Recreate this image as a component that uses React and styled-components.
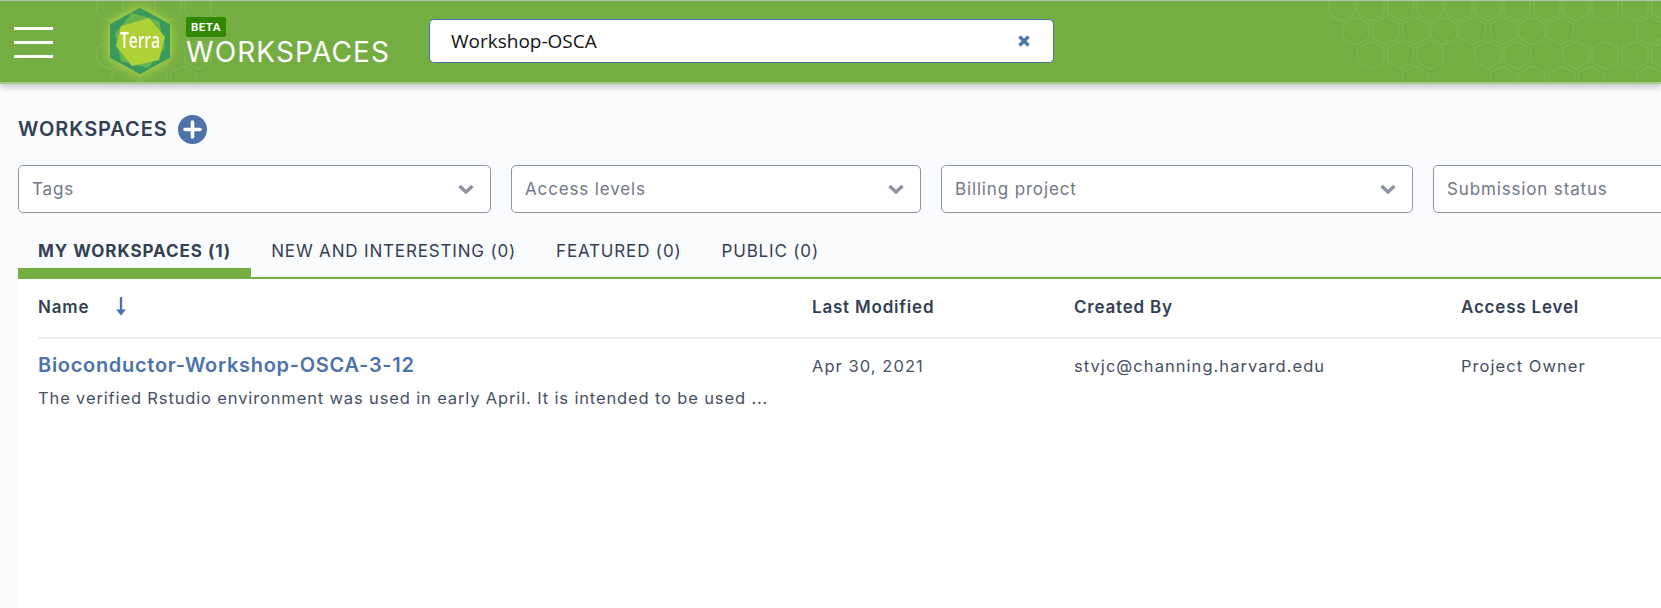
import React from 'react';
import styled, { createGlobalStyle } from 'styled-components';

const SANS = `Inter, 'Noto Sans', sans-serif`;
const GREEN = '#74ae43';
const BLUE = '#4d72aa';
const DARK = '#333f52';

const GlobalStyles = createGlobalStyle`
  html, body {
    margin: 0;
    height: 100%;
    overflow: hidden;
    background: #fafbfd;
    font-family: ${SANS};
  }
`;

const Page = styled.div`
  display: flex;
  flex-direction: column;
  height: 100vh;
  width: 1661px;
  overflow: hidden;
`;

const TopBar = styled.header`
  position: relative;
  z-index: 1;
  flex: none;
  box-sizing: border-box;
  height: 84px;
  display: flex;
  align-items: center;
  background: ${GREEN};
  border-top: 1px solid #b9bdb6;
  border-bottom: 2px solid #a3cb85;
  box-shadow: 0 3px 6px rgba(0, 0, 0, 0.22);
  overflow: hidden;
`;

const HexLayer = styled.svg`
  position: absolute;
  left: 0;
  top: -1px;
  pointer-events: none;
`;

const MenuButton = styled.div`
  display: flex;
  flex-direction: column;
  gap: 11px;
  width: 39px;
  margin-left: 14px;
  margin-top: 2px;
`;

const MenuBar = styled.span`
  display: block;
  height: 3px;
  background: #fff;
`;

const LogoMark = styled.svg`
  position: relative;
  flex: none;
  width: 60px;
  height: 66px;
  margin-left: 57px;
  margin-bottom: 1px;
  overflow: visible;
  filter: drop-shadow(0 0 6px rgba(205, 232, 70, 0.85));
`;

const TitleBlock = styled.div`
  position: relative;
  flex: none;
  width: 203px;
  margin-left: 16px;
`;

const BetaBadge = styled.div`
  width: 40px;
  height: 20px;
  border-radius: 2px;
  background: #318700;
  color: #fff;
  font: 700 11.5px/20px Roboto, sans-serif;
  letter-spacing: 0.4px;
  text-align: center;
`;

const AppTitle = styled.div`
  color: #fff;
  font-size: 28px;
  line-height: 28px;
  font-weight: 400;
  letter-spacing: 1.1px;
  white-space: nowrap;
  margin-top: 1px;
`;

const SearchBox = styled.div`
  position: relative;
  flex: none;
  box-sizing: border-box;
  width: 625px;
  height: 44px;
  margin-left: 40px;
  margin-bottom: 1px;
  padding: 0 21px;
  display: flex;
  align-items: center;
  justify-content: space-between;
  background: #fff;
  border: 1px solid ${BLUE};
  border-radius: 5px;
`;

const SearchText = styled.span`
  color: #111;
  font: 400 19px 'Open Sans', sans-serif;
`;

const ClearIcon = styled.svg`
  width: 14px;
  height: 14px;
  margin-right: 1px;
`;

const Main = styled.main`
  flex: 1;
  display: flex;
  flex-direction: column;
  min-height: 0;
  padding-left: 18px;
`;

const TitleRow = styled.div`
  display: flex;
  align-items: center;
  gap: 10px;
  height: 30px;
  margin-top: 30px;
`;

const PageTitle = styled.h1`
  margin: 0;
  color: ${DARK};
  font-size: 20px;
  font-weight: 600;
  letter-spacing: 0.95px;
`;

const AddButton = styled.svg`
  width: 29px;
  height: 29px;
`;

const Filters = styled.div`
  display: flex;
  gap: 20px;
  margin-top: 21px;
`;

const Select = styled.div`
  flex: none;
  box-sizing: border-box;
  width: ${(p) => p.$width}px;
  height: 48px;
  padding: 0 16px 0 13px;
  display: flex;
  align-items: center;
  justify-content: space-between;
  background: #fff;
  border: 1px solid #8f95a5;
  border-radius: 5px;
  color: #717786;
  font-size: 17px;
  letter-spacing: 0.85px;
`;

const Chevron = styled.svg`
  width: 16px;
  height: 10px;
`;

const Tabs = styled.nav`
  display: flex;
  height: 66px;
  border-bottom: 2px solid ${GREEN};
  box-sizing: border-box;
`;

const Tab = styled.div`
  display: flex;
  align-items: center;
  box-sizing: border-box;
  height: 65px;
  padding: 20px 20px 0;
  white-space: nowrap;
  color: ${DARK};
  font-size: 17px;
  font-weight: ${(p) => (p.$active ? 700 : 400)};
  letter-spacing: ${(p) => (p.$active ? '0.95px' : '0.83px')};
  border-bottom: 10px solid ${(p) => (p.$active ? GREEN : 'transparent')};
`;

const Table = styled.section`
  flex: 1;
  background: #fff;
  padding-left: 20px;
`;

const Columns = styled.div`
  display: grid;
  grid-template-columns: 774px 262px 387px 1fr;
`;

const HeaderRow = styled(Columns)`
  height: 60px;
  align-items: center;
  border-bottom: 2px solid #eceef1;
  box-sizing: border-box;
`;

const HeaderCell = styled.div`
  display: flex;
  align-items: center;
  gap: 26px;
  color: ${DARK};
  font-size: 17px;
  font-weight: 600;
  letter-spacing: 0.8px;
  margin-bottom: 3px;
`;

const SortArrow = styled.svg`
  width: 12px;
  height: 19px;
`;

const DataRow = styled(Columns)`
  padding-top: 14px;
`;

const NameCell = styled.div`
  display: flex;
  flex-direction: column;
  gap: 11px;
`;

const WorkspaceLink = styled.a`
  color: ${BLUE};
  font-size: 20px;
  line-height: 24px;
  font-weight: 600;
  letter-spacing: 0.7px;
  white-space: nowrap;
`;

const Description = styled.div`
  color: #465062;
  font-size: 16.5px;
  line-height: 21px;
  letter-spacing: 0.86px;
  white-space: nowrap;
`;

const DataCell = styled.div`
  color: #465062;
  font-size: 16.5px;
  line-height: 26px;
  letter-spacing: 1.05px;
  white-space: nowrap;
`;

// hexagon centres [y, x list] read off the header background
const HEX_ROWS = [
  [7, [110, 168, 198, 1342, 1371, 1401, 1430, 1459, 1488, 1517, 1547, 1576, 1605, 1635, 1665]],
  [31, [1356, 1386, 1415, 1444, 1473, 1503, 1532, 1561, 1650]],
  [55, [110, 198, 1371, 1401, 1430, 1488, 1517, 1576, 1605, 1635, 1665]],
  [80, [125, 154, 183, 1415, 1503, 1532, 1562, 1591, 1650]],
];

const hexPoints = (cx, cy) =>
  [[0, -14], [13, -7], [13, 7], [0, 14], [-13, 7], [-13, -7]]
    .map(([x, y]) => `${cx + x},${cy + y}`)
    .join(' ');

const HexBackground = () => (
  <HexLayer width="1661" height="84" fill="none" stroke="rgba(255,255,255,0.09)" strokeWidth="1.2" strokeLinejoin="round">
    {HEX_ROWS.map(([y, xs]) => xs.map((x) => <polygon key={`${x}-${y}`} points={hexPoints(x, y)} />))}
  </HexLayer>
);

const Logo = () => (
  <LogoMark viewBox="0 0 60 66">
    <polygon points="30,1 59,17 59,49 30,65 1,49 1,17" fill="#3a9a5c" stroke="#3a9a5c" strokeWidth="2" strokeLinejoin="round" />
    <polygon points="22,5 49,13 55,40 38,60 11,53 5,26" fill="#69b44c" />
    <polygon points="11,18 39,10 55,29 49,52 22,58 6,38" fill="#aed136" />
    <text x="30" y="39.5" fill="#fff" fontFamily="'Open Sans', sans-serif" fontSize="21" fontWeight="600" textAnchor="middle" textLength="40" lengthAdjust="spacingAndGlyphs">
      Terra
    </text>
  </LogoMark>
);

const ChevronIcon = () => (
  <Chevron viewBox="0 0 16 10">
    <path d="M1.5 2l6.5 6 6.5-6" fill="none" stroke="#8d92a0" strokeWidth="3.4" />
  </Chevron>
);

const filters = [
  { label: 'Tags', width: 473 },
  { label: 'Access levels', width: 410 },
  { label: 'Billing project', width: 472 },
  { label: 'Submission status', width: 473 },
];

const tabs = [
  { label: 'MY WORKSPACES (1)', active: true },
  { label: 'NEW AND INTERESTING (0)' },
  { label: 'FEATURED (0)' },
  { label: 'PUBLIC (0)' },
];

export default function App() {
  return (
    <Page>
      <GlobalStyles />
      <TopBar>
        <HexBackground />
        <MenuButton>
          <MenuBar />
          <MenuBar />
          <MenuBar />
        </MenuButton>
        <Logo />
        <TitleBlock>
          <BetaBadge>BETA</BetaBadge>
          <AppTitle>WORKSPACES</AppTitle>
        </TitleBlock>
        <SearchBox>
          <SearchText>Workshop-OSCA</SearchText>
          <ClearIcon viewBox="0 0 14 14">
            <path d="M2.5 2.5l9 9M11.5 2.5l-9 9" stroke={BLUE} strokeWidth="3.2" />
          </ClearIcon>
        </SearchBox>
      </TopBar>
      <Main>
        <TitleRow>
          <PageTitle>WORKSPACES</PageTitle>
          <AddButton viewBox="0 0 29 29">
            <circle cx="14.5" cy="14.5" r="14.5" fill={BLUE} />
            <path d="M14.5 7v15M7 14.5h15" stroke="#fff" strokeWidth="3.6" strokeLinecap="round" />
          </AddButton>
        </TitleRow>
        <Filters>
          {filters.map((f) => (
            <Select key={f.label} $width={f.width}>
              {f.label}
              <ChevronIcon />
            </Select>
          ))}
        </Filters>
        <Tabs>
          {tabs.map((t) => (
            <Tab key={t.label} $active={t.active}>{t.label}</Tab>
          ))}
        </Tabs>
        <Table>
          <HeaderRow>
            <HeaderCell>
              Name
              <SortArrow viewBox="0 0 12 19">
                <path d="M6 1v12" stroke={BLUE} strokeWidth="2.4" strokeLinecap="round" />
                <path d="M1 12.5h10L6 18.5z" fill={BLUE} />
              </SortArrow>
            </HeaderCell>
            <HeaderCell>Last Modified</HeaderCell>
            <HeaderCell>Created By</HeaderCell>
            <HeaderCell>Access Level</HeaderCell>
          </HeaderRow>
          <DataRow>
            <NameCell>
              <WorkspaceLink>Bioconductor-Workshop-OSCA-3-12</WorkspaceLink>
              <Description>The verified Rstudio environment was used in early April. It is intended to be used ...</Description>
            </NameCell>
            <DataCell>Apr 30, 2021</DataCell>
            <DataCell>stvjc@channing.harvard.edu</DataCell>
            <DataCell>Project Owner</DataCell>
          </DataRow>
        </Table>
      </Main>
    </Page>
  );
}
